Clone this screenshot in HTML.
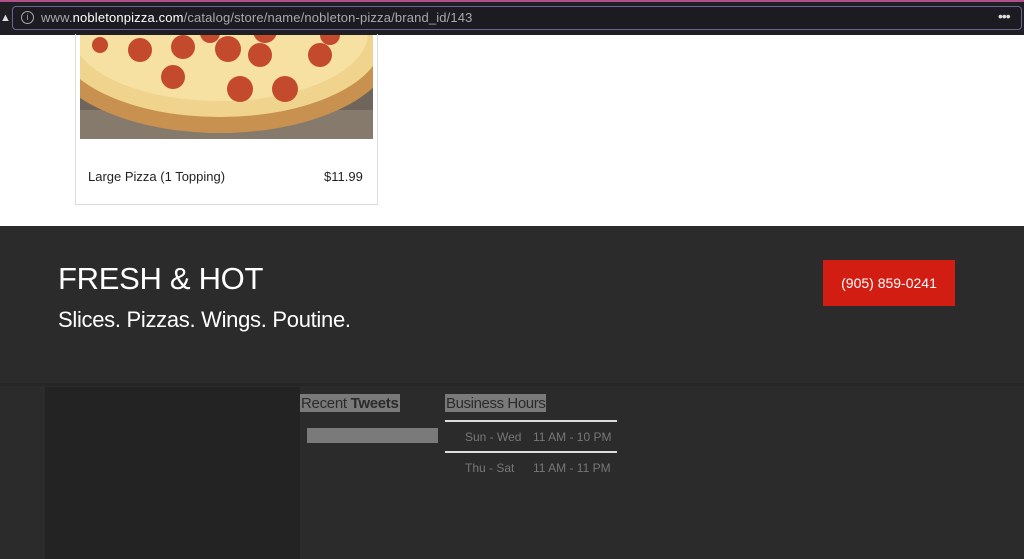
<!DOCTYPE html>
<html><head><style>
*{margin:0;padding:0;box-sizing:border-box}
body{width:1024px;height:559px;overflow:hidden;background:#fff;font-family:"Liberation Sans",sans-serif;position:relative}
.abs{position:absolute}
</style></head><body>
<div class="abs" style="left:0;top:0;width:1024px;height:35px;background:#1f1e25;border-top:2px solid #b0508a"></div>
<div class="abs" style="left:12px;top:6px;width:1010px;height:24px;border:1px solid #6a6590;border-radius:4px;background:#1c1b22"></div>
<div class="abs" style="left:0;top:12px;color:#ddd;font-size:11px">▲</div>
<div class="abs" style="left:21px;top:11px;width:13px;height:13px;border:1.3px solid #aaa;border-radius:50%;color:#aaa;font-size:9px;text-align:center;line-height:11px">i</div>
<div class="abs" style="left:41px;top:10px;font-size:13px;color:#a8a8ad;letter-spacing:0.15px">www.<span style="color:#fff">nobletonpizza.com</span>/catalog/store/name/nobleton-pizza/brand_id/143</div>
<div class="abs" style="left:998px;top:8px;font-size:14px;color:#ddd;letter-spacing:-1px">•••</div>

<div class="abs" style="left:75px;top:34px;width:303px;height:171px;border:1px solid #ddd;border-top:none"></div>
<svg class="abs" style="left:80px;top:35px" width="293" height="104" viewBox="0 0 293 104">
<rect width="293" height="104" fill="#6f655a"/>
<rect y="75" width="293" height="29" fill="#857a6c"/>
<ellipse cx="140" cy="10" rx="175" ry="88" fill="#c9914f"/>
<ellipse cx="140" cy="4" rx="163" ry="78" fill="#f0d48e"/>
<ellipse cx="140" cy="-2" rx="148" ry="68" fill="#f6e0a2"/>
<g fill="#c44a2e">
<circle cx="60" cy="15" r="12"/><circle cx="103" cy="12" r="12"/><circle cx="148" cy="14" r="13"/><circle cx="180" cy="20" r="12"/><circle cx="240" cy="20" r="12"/><circle cx="250" cy="0" r="10"/><circle cx="185" cy="-4" r="12"/><circle cx="130" cy="-2" r="10"/><circle cx="93" cy="42" r="12"/><circle cx="160" cy="54" r="13"/><circle cx="205" cy="54" r="13"/><circle cx="20" cy="10" r="8"/>
</g></svg>
<div class="abs" style="left:88px;top:169px;font-size:13px;color:#222">Large Pizza (1 Topping)</div>
<div class="abs" style="left:324px;top:169px;font-size:13px;color:#222">$11.99</div>

<div class="abs" style="left:0;top:226px;width:1024px;height:157px;background:#2b2b2b"></div>
<div class="abs" style="left:58px;top:261px;font-size:31px;color:#fff;letter-spacing:-0.3px">FRESH &amp; HOT</div>
<div class="abs" style="left:58px;top:307px;font-size:22px;color:#fff;letter-spacing:-0.3px">Slices. Pizzas. Wings. Poutine.</div>
<div class="abs" style="left:823px;top:260px;width:132px;height:46px;background:#d21e12;color:#fff;font-size:14px;text-align:center;line-height:46px">(905) 859-0241</div>

<div class="abs" style="left:0;top:383px;width:1024px;height:176px;background:#2b2b2b;border-top:3px solid #262626"></div>
<div class="abs" style="left:45px;top:387px;width:255px;height:172px;background:#232323"></div>
<div class="abs" style="left:300px;top:394px;height:18px;background:#7a7a7a;color:#2b2b2b;font-size:15px;line-height:20px;padding:0 1px;letter-spacing:-0.3px">Recent <b>Tweets</b></div>
<div class="abs" style="left:307px;top:428px;width:131px;height:15px;background:#7a7a7a"></div>
<div class="abs" style="left:445px;top:394px;height:18px;background:#7a7a7a;color:#2b2b2b;font-size:15px;line-height:20px;padding:0 1px;letter-spacing:-0.4px">Business Hours</div>
<div class="abs" style="left:445px;top:420px;width:172px;height:2px;background:#ddd"></div>
<div class="abs" style="left:465px;top:430px;font-size:12px;color:#777">Sun - Wed</div>
<div class="abs" style="left:533px;top:430px;font-size:12px;color:#777">11 AM - 10 PM</div>
<div class="abs" style="left:445px;top:451px;width:172px;height:2px;background:#ddd"></div>
<div class="abs" style="left:465px;top:461px;font-size:12px;color:#777">Thu - Sat</div>
<div class="abs" style="left:533px;top:461px;font-size:12px;color:#777">11 AM - 11 PM</div>
</body></html>
